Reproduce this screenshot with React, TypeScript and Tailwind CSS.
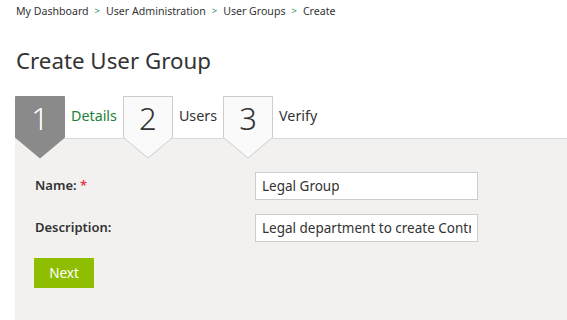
import React from "react";

const steps = [
  { num: "1", label: "Details", active: true },
  { num: "2", label: "Users", active: false },
  { num: "3", label: "Verify", active: false },
];

const crumbs = ["My Dashboard", "User Administration", "User Groups", "Create"];

const StepBadge = ({ num, active }: { num: string; active: boolean }) => (
  <div className="relative w-[50px] h-[42px] shrink-0">
    <svg className="absolute left-0 top-0" width="50" height="63" viewBox="0 0 50 63">
      <polygon
        points="0.5,0.5 49.5,0.5 49.5,41.5 25,62 0.5,41.5"
        fill={active ? "#8a8a8a" : "#fafafa"}
        stroke={active ? "#8a8a8a" : "#cccccc"}
        strokeWidth="1"
      />
    </svg>
    <span
      className={`relative flex justify-center pt-[3px] text-[31px] leading-[38px] font-light ${
        active ? "text-white" : "text-[#333]"
      }`}
    >
      {num}
    </span>
  </div>
);

const App = () => {
  return (
    <div className="w-[567px] h-[320px] overflow-hidden bg-white text-[#333] font-['Noto_Sans',sans-serif]">
      <div className="flex items-center gap-[6px] pl-4 pt-[3px] h-[20px] text-[10.6px]">
        {crumbs.map((c, i) => (
          <React.Fragment key={c}>
            {i > 0 && <span className="text-[#1f8a5a] text-[9.5px]">&gt;</span>}
            <span>{c}</span>
          </React.Fragment>
        ))}
      </div>

      <h1 className="pl-4 pt-[26px] text-[22.3px] leading-[30px] text-[#333]">Create User Group</h1>

      <div className="relative z-10 flex items-start pl-[15px] mt-[20px] h-[42px]">
        {steps.map((s) => (
          <div key={s.num} className="flex items-start">
            <StepBadge num={s.num} active={s.active} />
            <span
              className={`pl-[6px] pr-[6px] pt-[10px] text-[14.3px] leading-[20px] ${
                s.active ? "text-[#1d7f3a]" : "text-[#333]"
              }`}
            >
              {s.label}
            </span>
          </div>
        ))}
      </div>

      <div className="ml-[15px] h-[200px] bg-[#f2f1f0] border-t border-[#d9d9d9] pl-[20px] pt-[33px]">
        <div className="flex items-center h-[28px]">
          <label className="w-[220px] text-[13px] font-semibold text-[#333]">
            Name: <span className="text-[#e8334a]">*</span>
          </label>
          <input
            readOnly
            value="Legal Group"
            className="w-[223px] h-[28px] bg-white border border-[#cccccc] px-[6px] text-[13.5px] text-[#333] outline-none"
          />
        </div>
        <div className="flex items-center h-[28px] mt-[14px]">
          <label className="w-[220px] text-[13px] font-semibold text-[#333]">Description:</label>
          <input
            readOnly
            value="Legal department to create Contracts"
            className="w-[223px] h-[28px] bg-white border border-[#cccccc] px-[6px] text-[13.5px] text-[#333] outline-none"
          />
        </div>
        <button className="mt-[16px] -ml-px w-[60px] h-[30px] bg-[#8fbd00] text-white text-[13.5px]">
          Next
        </button>
      </div>
    </div>
  );
};

export default App;
